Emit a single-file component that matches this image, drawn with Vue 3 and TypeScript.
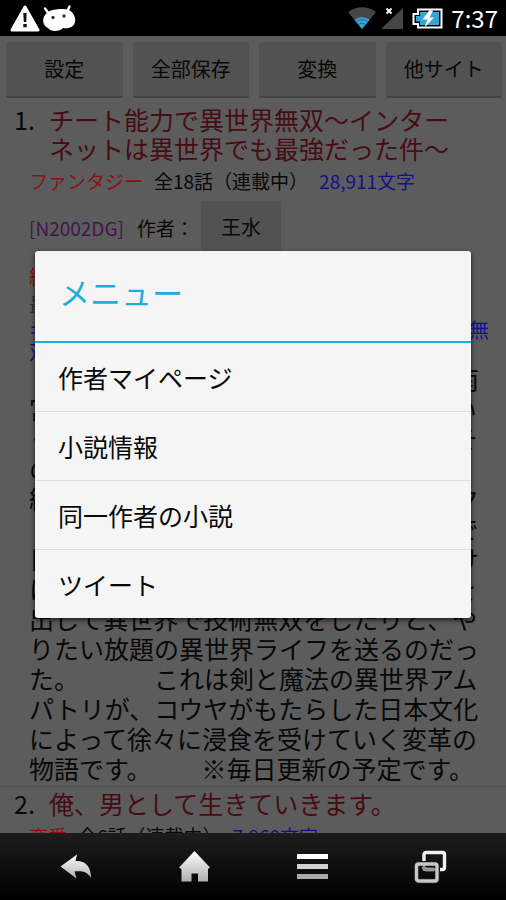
<script setup lang="ts">
interface MenuEntry {
  id: string
  label: string
}

interface Novel {
  no: number
  title: string
  genre: string
  episodes: string
  length: string
}

const tools: string[] = ['設定', '全部保存', '変換', '他サイト']

const menu: MenuEntry[] = [
  { id: 'mypage', label: '作者マイページ' },
  { id: 'info', label: '小説情報' },
  { id: 'same', label: '同一作者の小説' },
  { id: 'tweet', label: 'ツイート' },
]

const first: Novel = {
  no: 1,
  title: 'チート能力で異世界無双～インターネットは異世界でも最強だった件～',
  genre: 'ファンタジー',
  episodes: '全18話（連載中）',
  length: '28,911文字',
}

const second: Novel = {
  no: 2,
  title: '俺、男として生きていきます。',
  genre: '恋愛',
  episodes: '全6話（連載中）',
  length: '7,960文字',
}

const keywords = 'キーワード：異世界　転生　チート　ネット最強無双'

const story: string = [
  '　　ごく普通の高校生だった主人公の南',
  '宮コウヤは、ある日突然に気を失ってい',
  'く中で神様と出会い、異世界へ転生とそ',
  'の力を与えられることになった。',
  '続けて授かった能力はネットのチェック',
  '　どんな情報も検索できる最強の力まで',
  '日本の知識を異世界に次々と広めるだけ',
  'に限らず、便利な品や新しい料理などを',
  '出して異世界で技術無双をしたりと、や',
  'りたい放題の異世界ライフを送るのだっ',
  'た。　　　これは剣と魔法の異世界アム',
  'パトリが、コウヤがもたらした日本文化',
  'によって徐々に浸食を受けていく変革の',
  '物語です。　　※毎日更新の予定です。',
].join('\n')
</script>

<template>
  <div class="phone">
    <header class="status">
      <svg class="alert" viewBox="0 0 30 27" aria-hidden="true">
        <path d="M15 2 L28 25 H2 Z" fill="#fff" stroke="#fff" stroke-width="3" stroke-linejoin="round" />
        <path d="M13.3 8 h3.4 l-.5 9 h-2.4z M13.3 19 h3.4 v3.2 h-3.4z" fill="#111" />
      </svg>
      <svg class="droid" viewBox="0 0 34 27" aria-hidden="true">
        <path d="M3 3.500 L7 9 M27.500 1.500 L25 7" stroke="#fff" stroke-width="2.400" stroke-linecap="round" />
        <path d="M6 7 C10 4 22 3 27 5 C32 8 34 13 33 17 C32 22 27 24 21 23 C18 27 8 27 6 23 C0 20 -1 12 6 7Z" fill="#fff" />
        <circle cx="11" cy="12.500" r="1.700" fill="#333" />
        <circle cx="22" cy="11" r="1.700" fill="#333" />
      </svg>
      <span class="spacer"></span>
      <svg class="wifi" viewBox="0 0 28 22" aria-hidden="true">
        <path d="M14 22 L0 5 C8 -1.500 20 -1.500 28 5Z" fill="#464646" />
        <path d="M14 22 L6.300 12.700 C11 9.300 17 9.300 21.700 12.700Z" fill="#36a4d4" />
        <path d="M8.500 14.500 C12 12 16 12 19.500 14.500 M10.500 17.500 C13 16 15 16 17.500 17.500" fill="none" stroke="#176f98" stroke-width="1" />
      </svg>
      <svg class="signal" viewBox="0 0 22 22" aria-hidden="true">
        <path d="M22 1 V22 H0Z" fill="#464646" />
        <path d="M5.500 1.500 l5 5 m0 -5 l-5 5" stroke="#fff" stroke-width="1.800" />
      </svg>
      <svg class="battery" viewBox="0 0 31 21" aria-hidden="true">
        <path d="M6 1.500 H29.500 V19.500 H6 V16 H1.500 V6 H6Z" fill="#000" stroke="#fff" stroke-width="2" />
        <path d="M8 4 H27 V17 H8 V13.500 H4 V8 H8Z" fill="#36a4d4" />
        <path d="M18 1.500 L10.500 11.500 H15.500 L12.500 19.500 L22 9.500 H17.500 L21 3Z" fill="#fff" />
      </svg>
      <time class="clock">7:37</time>
    </header>

    <div class="stage">
      <main class="page">
        <nav class="tools">
          <button v-for="tool in tools" :key="tool" type="button" class="tool">{{ tool }}</button>
        </nav>

        <article class="novel">
          <h2 class="heading">
            <span class="no">{{ first.no }}.</span>
            <a href="#novel-1" class="name">{{ first.title }}</a>
          </h2>
          <div class="detail">
            <p class="meta">
              <span class="red">{{ first.genre }}</span>
              <span>{{ first.episodes }}</span>
              <span class="blue">{{ first.length }}</span>
            </p>
            <div class="author">
              <a href="#n2002dg" class="code">[N2002DG]</a>
              <span>作者：</span>
              <button type="button" class="writer">王水</button>
            </div>
            <p class="line red">総合評価</p>
            <p class="line grey">最終更新日</p>
            <p class="keywords">{{ keywords }}</p>
            <p class="story">{{ story }}</p>
          </div>
        </article>

        <article class="novel next">
          <h2 class="heading">
            <span class="no">{{ second.no }}.</span>
            <a href="#novel-2" class="name">{{ second.title }}</a>
          </h2>
          <div class="detail">
            <p class="meta">
              <span class="red">{{ second.genre }}</span>
              <span>{{ second.episodes }}</span>
              <span class="blue">{{ second.length }}</span>
            </p>
          </div>
        </article>
      </main>

      <div class="overlay">
        <section class="dialog" role="dialog" aria-labelledby="menu-title">
          <h1 id="menu-title" class="dialog-title">メニュー</h1>
          <ul class="menu">
            <li v-for="entry in menu" :key="entry.id" class="row">
              <button type="button" class="entry">{{ entry.label }}</button>
            </li>
          </ul>
        </section>
      </div>
    </div>

    <footer class="keys">
      <button type="button" class="key" aria-label="戻る">
        <svg viewBox="0 0 34 34">
          <defs>
            <linearGradient id="metal" x1="0" y1="0" x2="0" y2="1">
              <stop offset="0" stop-color="#fff" />
              <stop offset="1" stop-color="#b0b0b0" />
            </linearGradient>
          </defs>
          <path d="M1.500 16.500 L18 4.500 L16.500 11 C26 10.500 32 16 32 28 C29 22 23 20.500 15.500 21.500 L17.500 28.500 Z" fill="url(#metal)" />
        </svg>
      </button>
      <button type="button" class="key" aria-label="ホーム">
        <svg viewBox="0 0 34 34">
          <path d="M17.500 1 L33 17.500 L31 19 V31.500 H21 V23.500 H14.500 V31.500 H4.500 V19 L2 17.500 Z" fill="url(#metal)" />
        </svg>
      </button>
      <button type="button" class="key" aria-label="メニュー">
        <svg viewBox="0 0 34 34">
          <rect x="2" y="4" width="31" height="5" fill="#fff" />
          <rect x="2" y="14" width="31" height="5" fill="#d2d2d2" />
          <rect x="2" y="24" width="31" height="5" fill="#aaa" />
        </svg>
      </button>
      <button type="button" class="key" aria-label="最近使ったアプリ">
        <svg viewBox="0 0 34 34">
          <rect x="11" y="2.500" width="20.500" height="17" rx="2" fill="none" stroke="#f0f0f0" stroke-width="3.400" />
          <rect x="3.500" y="14" width="20.500" height="17" rx="2" fill="none" stroke="#161616" stroke-width="6" />
          <path d="M11 14 V19.500 H24" fill="none" stroke="#8a8a8a" stroke-width="2.400" />
          <rect x="3.500" y="14" width="20.500" height="17" rx="2" fill="none" stroke="#c8c8c8" stroke-width="3.400" />
        </svg>
      </button>
    </footer>
  </div>
</template>

<style>
body {
  background: #000;
}
</style>

<style scoped>
.phone {
  display: flex;
  flex-direction: column;
  height: 100vh;
  overflow: hidden;
  background: #000;
  color: #080808;
  font-family: "Noto Sans CJK JP", "Noto Sans", sans-serif;
  font-size: 20px;
  line-height: 22px;
  text-spacing-trim: space-all;
}

.phone * {
  box-sizing: border-box;
}

h1,
h2,
p,
ul {
  margin: 0;
  padding: 0;
  font-weight: 400;
  list-style: none;
}

button {
  border: 0;
  padding: 0;
  font: inherit;
  color: inherit;
  cursor: pointer;
}

a {
  color: inherit;
  text-decoration: none;
}

.status {
  display: flex;
  flex: none;
  align-items: center;
  height: 36px;
  padding: 0 8px 0 10px;
  color: #fff;
}

.status svg {
  flex: none;
}

.alert {
  width: 30px;
  height: 27px;
}

.droid {
  width: 34px;
  height: 27px;
  margin-left: 2px;
}

.spacer {
  flex: 1;
}

.wifi {
  width: 28px;
  height: 22px;
}

.signal {
  width: 22px;
  height: 22px;
  margin-left: 5px;
}

.battery {
  width: 31px;
  height: 21px;
  margin-left: 9px;
}

.clock {
  margin-left: 8px;
  font-size: 24px;
  line-height: 34px;
}

.stage {
  position: relative;
  flex: 1;
  min-height: 0;
  overflow: hidden;
  background: #5c5c5c;
}

.tools {
  display: grid;
  grid-template-columns: repeat(4, 1fr);
  gap: 10px;
  padding: 6px 4px 0 6px;
}

.tool,
.writer {
  background: #525252;
  border-bottom: 2px solid #434343;
  border-radius: 2px;
}

.tool {
  height: 56px;
}

.novel {
  padding: 7px 16px 3px 14px;
}

.next {
  padding-top: 2px;
  border-top: 1px solid #525252;
}

.heading {
  display: flex;
  font-size: 25px;
  line-height: 29px;
}

.no {
  flex: none;
  width: 35px;
}

.name {
  max-width: 424px;
  color: #480c14;
}

.detail {
  padding-left: 15px;
}

.meta {
  display: flex;
  gap: 11px;
  padding: 7px 0 9px;
  font-size: 19px;
  white-space: nowrap;
}

.red {
  color: #8e1010;
}

.blue,
.keywords {
  color: #14108a;
}

.grey {
  color: #303030;
}

.code {
  margin-right: 6px;
  color: #451450;
}

.author {
  display: flex;
  align-items: center;
  gap: 7px;
  padding-bottom: 8px;
  font-size: 19px;
}

.writer {
  width: 80px;
  height: 54px;
  font-size: 20px;
}

.line {
  padding: 3px 0;
}

.keywords {
  margin-right: -8px;
}

.story {
  font-size: 25px;
  line-height: 30px;
  white-space: pre-line;
}

.overlay {
  position: absolute;
  inset: 0;
  display: flex;
  align-items: center;
  padding: 0 35px;
}

.dialog {
  flex: 1;
  overflow: hidden;
  background: #f5f5f5;
  border-radius: 3px;
  box-shadow: 0 2px 5px rgba(0, 0, 0, 0.7);
}

.dialog-title {
  padding: 0 24px 8px;
  border-bottom: 2px solid #1fadd9;
  color: #1fadd9;
  font-size: 31px;
  line-height: 82px;
}

.row + .row {
  border-top: 1px solid #dedede;
}

.entry {
  display: block;
  width: 100%;
  padding: 0 23px;
  background: none;
  font-size: 25px;
  line-height: 68px;
  text-align: left;
}

.keys {
  display: flex;
  flex: none;
  height: 67px;
  padding: 0 17px;
  background: linear-gradient(#1d1d1d, #000);
}

.key {
  display: flex;
  flex: 1;
  align-items: center;
  justify-content: center;
  background: none;
}

.key svg {
  width: 34px;
  height: 34px;
}
</style>
